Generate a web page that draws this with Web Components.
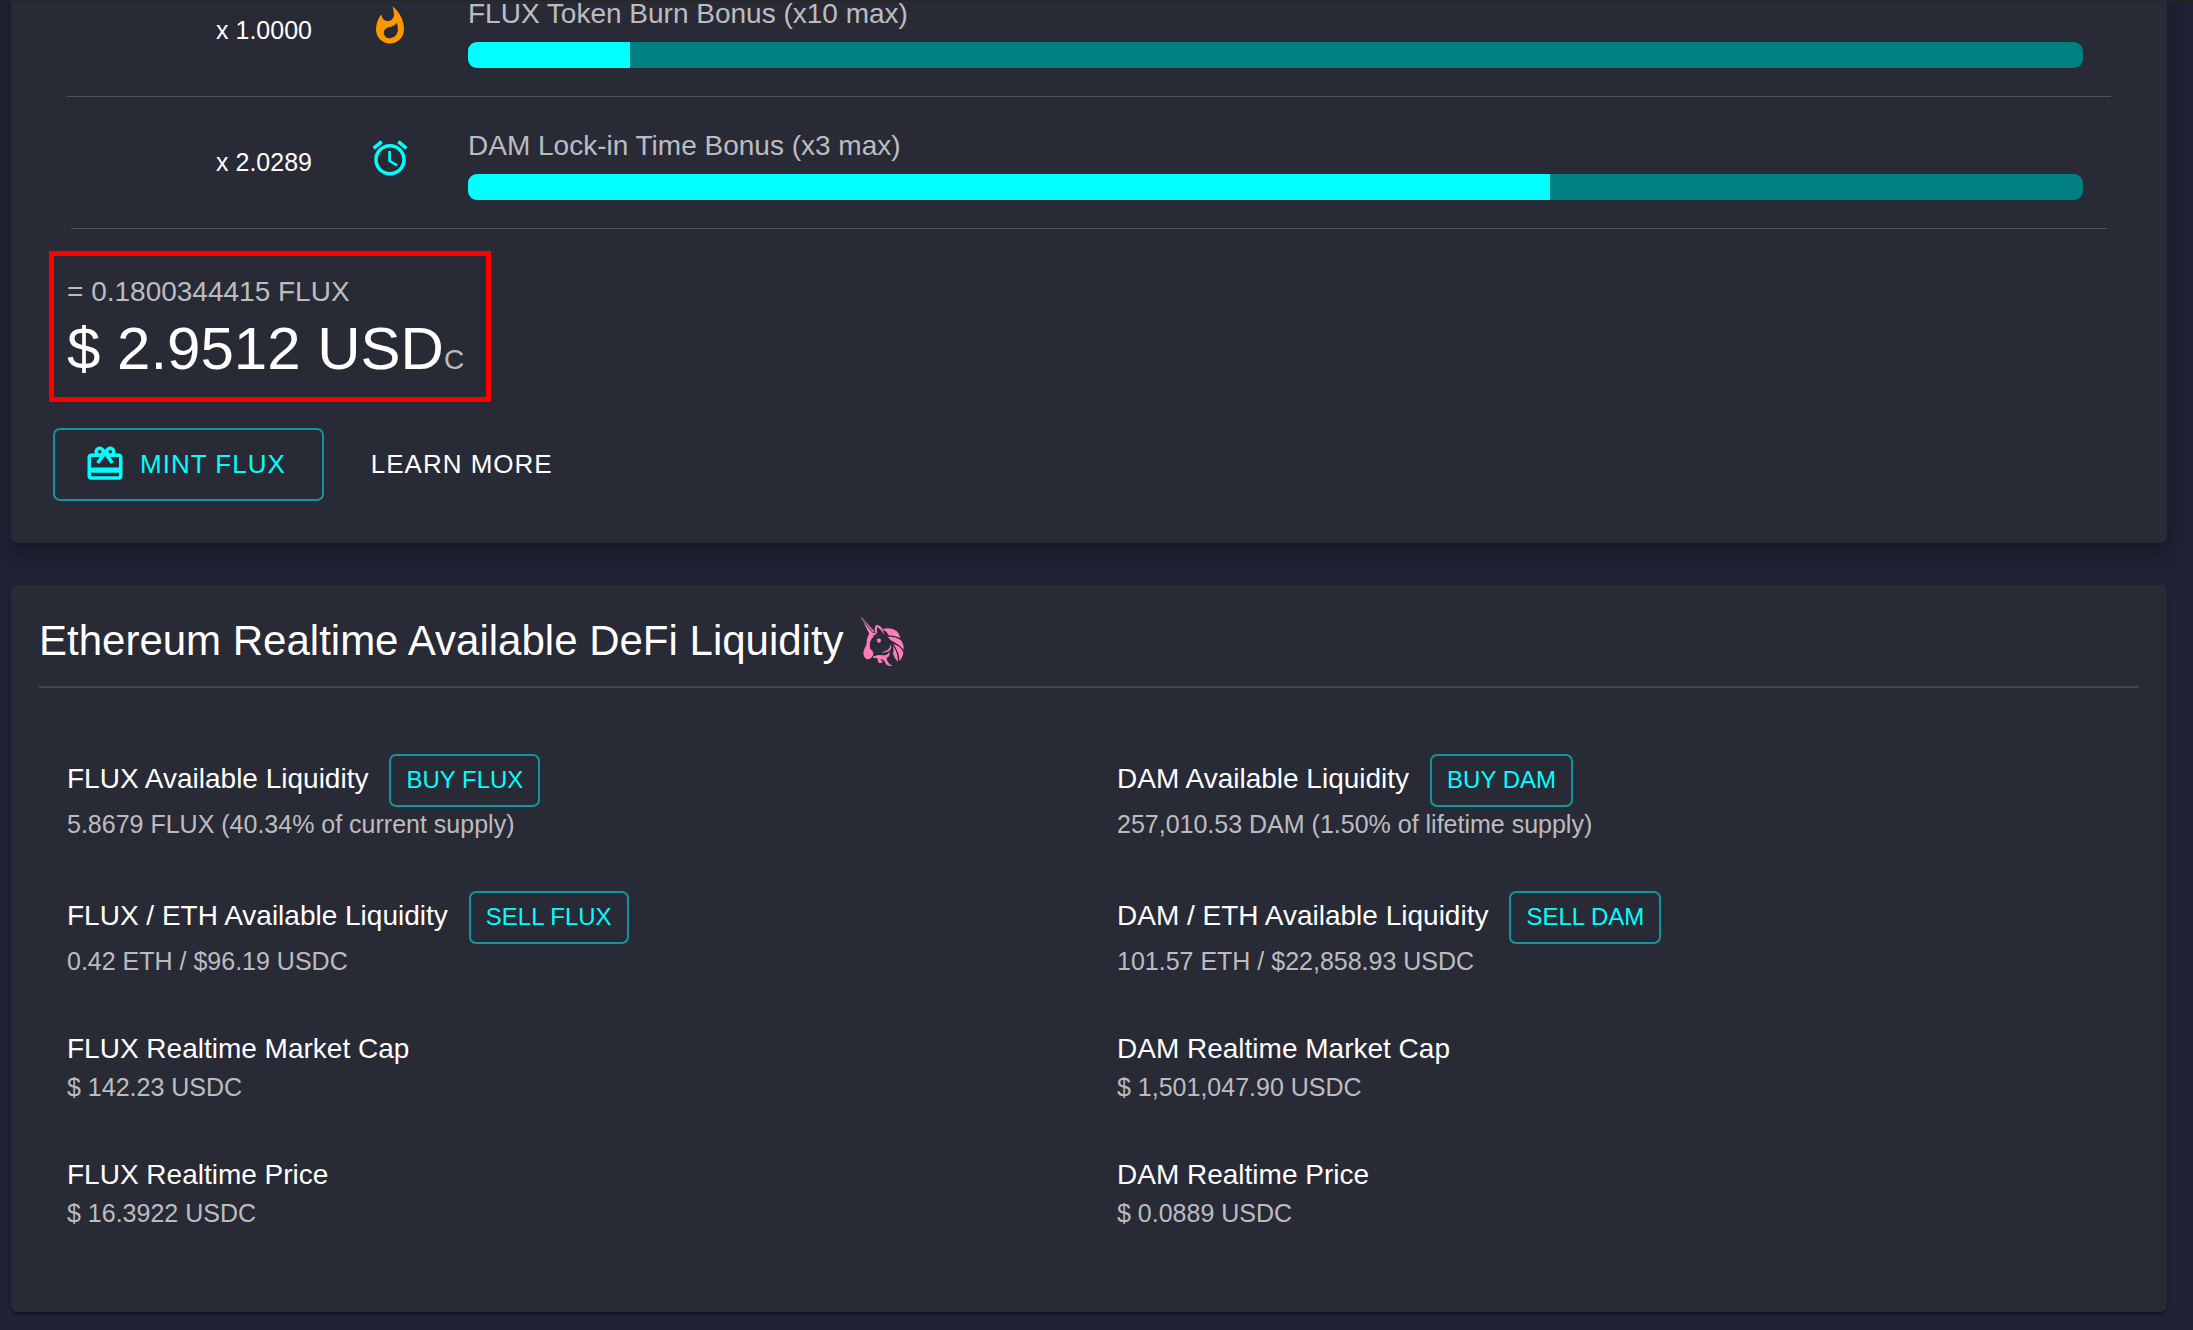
<!DOCTYPE html>
<html lang="en">
<head>
<meta charset="utf-8">
<title>Datamine Network</title>
<style>
	body {
		margin: 0;
		background: #202235;
		color: #fff;
		font-family: "Liberation Sans", Arial, sans-serif;
		font-size: 28px;
		line-height: 42px;
	}
</style>
</head>
<body>
<dam-page>
	<dam-card elevation="8">
		<dam-multiplier value="x 1.0000" percent="10">
			<dam-icon slot="icon" name="flame"></dam-icon>
			FLUX Token Burn Bonus (x10 max)
		</dam-multiplier>
		<dam-multiplier value="x 2.0289" percent="67" last>
			<dam-icon slot="icon" name="alarm"></dam-icon>
			DAM Lock-in Time Bonus (x3 max)
		</dam-multiplier>
		<dam-balance amount="= 0.1800344415 FLUX" price="$ 2.9512 USD" suffix="C"></dam-balance>
		<dam-actions>
			<dam-button size="large"><dam-icon slot="icon" name="redeem"></dam-icon>MINT FLUX</dam-button>
			<dam-button size="large" plain>LEARN MORE</dam-button>
		</dam-actions>
	</dam-card>

	<dam-card elevation="1">
		<dam-title>Ethereum Realtime Available DeFi Liquidity<dam-icon slot="icon" name="unicorn"></dam-icon></dam-title>
		<dam-stats>
			<dam-stat value="5.8679 FLUX (40.34% of current supply)">FLUX Available Liquidity<dam-button slot="action">BUY FLUX</dam-button></dam-stat>
			<dam-stat value="257,010.53 DAM (1.50% of lifetime supply)">DAM Available Liquidity<dam-button slot="action">BUY DAM</dam-button></dam-stat>
			<dam-stat value="0.42 ETH / $96.19 USDC">FLUX / ETH Available Liquidity<dam-button slot="action">SELL FLUX</dam-button></dam-stat>
			<dam-stat value="101.57 ETH / $22,858.93 USDC">DAM / ETH Available Liquidity<dam-button slot="action">SELL DAM</dam-button></dam-stat>
			<dam-stat value="$ 142.23 USDC">FLUX Realtime Market Cap</dam-stat>
			<dam-stat value="$ 1,501,047.90 USDC">DAM Realtime Market Cap</dam-stat>
			<dam-stat value="$ 16.3922 USDC">FLUX Realtime Price</dam-stat>
			<dam-stat value="$ 0.0889 USDC">DAM Realtime Price</dam-stat>
		</dam-stats>
	</dam-card>
</dam-page>

<script>
	// Base class: renders the string from template() into the shadow root
	class DamElement extends HTMLElement {
		connectedCallback() {
			if (this.shadowRoot) return
			this.attachShadow({ mode: 'open' })
			this.shadowRoot.innerHTML = this.template()
		}
	}

	const icons = {
		flame: {
			box: '0 0 24 24', width: 42, height: 42, color: '#ff9800',
			body: '<path d="M13.5.67s.74 2.65.74 4.8c0 2.06-1.35 3.73-3.41 3.73-2.07 0-3.63-1.67-3.63-3.73l.03-.36C5.21 7.51 4 10.62 4 14c0 4.42 3.58 8 8 8s8-3.58 8-8C20 8.61 17.41 3.8 13.5.67zM11.71 19c-1.78 0-3.22-1.4-3.22-3.14 0-1.62 1.05-2.76 2.81-3.12 1.77-.36 3.6-1.21 4.62-2.58.39 1.29.59 2.65.59 4.04 0 2.65-2.15 4.8-4.8 4.8z"/>',
		},
		alarm: {
			box: '0 0 24 24', width: 42, height: 42, color: '#0ff',
			body: '<path d="M22 5.72l-4.6-3.86-1.29 1.53 4.6 3.86L22 5.72zM7.88 3.39L6.6 1.86 2 5.71l1.29 1.53 4.59-3.85zM12.5 8H11v6l4.75 2.85.75-1.23-4-2.37V8zM12 4c-4.97 0-9 4.03-9 9s4.02 9 9 9c4.97 0 9-4.03 9-9s-4.03-9-9-9zm0 16c-3.87 0-7-3.13-7-7s3.13-7 7-7 7 3.13 7 7-3.13 7-7 7z"/>',
		},
		redeem: {
			box: '0 0 24 24', width: 42, height: 42, color: '#0ff',
			body: '<path d="M20 6h-2.18c.11-.31.18-.65.18-1 0-1.66-1.34-3-3-3-1.05 0-1.96.54-2.5 1.35l-.5.67-.5-.68C10.96 2.54 10.05 2 9 2 7.34 2 6 3.34 6 5c0 .35.07.69.18 1H4c-1.11 0-1.99.89-1.99 2L2 19c0 1.11.89 2 2 2h16c1.11 0 2-.89 2-2V8c0-1.11-.89-2-2-2zm-5-2c.55 0 1 .45 1 1s-.45 1-1 1-1-.45-1-1 .45-1 1-1zM9 4c.55 0 1 .45 1 1s-.45 1-1 1-1-.45-1-1 .45-1 1-1zm11 15H4v-2h16v2zm0-5H4V8h5.08L7 10.83 8.62 12 11 8.76l1-1.36 1 1.36L15.38 12 17 10.83 14.92 8H20v6z"/>',
		},
		unicorn: {
			box: '58 46 135 156', width: 45, height: 52, color: '#ff7bb9',
			body: `
				<path d="M60 50L101 95L98 101L102 99L108 104L94 109Q88 106 85 101Z"/>
				<path d="M66 61L98 100" fill="none" stroke="#282a36" stroke-width="3"/>
				<path d="M104 99Q99 82 107 76Q120 76 126 90L131 105Q121 90 110 81Q107 88 110 101Z"/>
				<path d="M86 100L100 110Q91 117 88 128Q86 141 89 149Q96 152 98 159Q99 165 94 172Q85 181 78 178Q68 174 68 158Q71 145 77 136Q77 116 86 100Z"/>
				<path d="M108 119Q115 114 121 120Q122 128 115 130Q108 128 108 119Z"/>
				<path d="M124 88Q151 81 168 94Q177 103 179 115Q160 108 144 107Q137 94 124 88Z"/>
				<path d="M141 111Q165 110 180 121Q190 132 189 150Q176 134 160 127Q148 123 141 111Z"/>
				<path d="M158 132Q180 139 188 158Q187 174 176 184Q177 160 158 132Z"/>
				<path d="M157 138Q172 157 172 187Q161 177 157 162Q160 150 157 138Z"/>
				<path d="M151 133Q155 149 144 155Q132 160 121 158Q135 155 141 151Q148 145 151 133Z"/>
				<path d="M97 171Q110 163 127 167Q140 168 146 156Q149 170 138 174Q138 190 155 198Q137 202 131 184Q127 176 119 180Q119 185 126 182Q126 191 117 191Q110 187 111 178Q104 172 97 176Z"/>`,
		},
	}

	class DamIcon extends DamElement {
		template() {
			const icon = icons[this.getAttribute('name')]
			return `
				<style>
					:host { display: block; flex: none; }
					svg { display: block; fill: ${icon.color}; }
				</style>
				<svg viewBox="${icon.box}" width="${icon.width}" height="${icon.height}" aria-hidden="true">${icon.body}</svg>
			`
		}
	}

	class DamPage extends DamElement {
		template() {
			return `
				<style>
					:host {
						display: block;
						overflow: clip;
						border-top: 1px solid #252525;
					}
					/* the list is scrolled a little past its first row */
					main {
						display: flex;
						flex-direction: column;
						gap: 42px;
						margin-top: -36px;
						padding: 0 26px 18px 11px;
					}
				</style>
				<main><slot></slot></main>
			`
		}
	}

	class DamCard extends DamElement {
		template() {
			return `
				<style>
					:host {
						display: block;
						background: #282a36;
						border-radius: 7px;
					}
					:host([elevation="8"]) {
						box-shadow: 0 9px 9px -5px rgba(0, 0, 0, .2), 0 14px 18px 2px rgba(0, 0, 0, .08), 0 5px 24px 4px rgba(0, 0, 0, .1);
					}
					:host([elevation="1"]) {
						box-shadow: 0 4px 2px -2px rgba(0, 0, 0, .2), 0 2px 2px rgba(0, 0, 0, .14), 0 2px 5px rgba(0, 0, 0, .12);
					}
				</style>
				<slot></slot>
			`
		}
	}

	class DamMultiplier extends DamElement {
		template() {
			return `
				<style>
					:host {
						display: grid;
						grid-template-columns: 245px 156px 1fr;
						margin: 0 56px;
						padding-right: 28px;
						border-bottom: 1px solid #515151;
					}
					:host([last]) {
						grid-template-columns: 241px 156px 1fr;
						margin: 0 60px;
						padding-right: 24px;
					}
					.value {
						padding-top: 46px;
						font-size: 25px;
						line-height: 38px;
						text-align: right;
					}
					.icon {
						padding-top: 40px;
						justify-self: center;
					}
					.bonus { padding: 33px 0 28px; }
					.label {
						color: rgba(255, 255, 255, .7);
						line-height: 32px;
						margin-bottom: 12px;
					}
					.track {
						height: 26px;
						border-radius: 9px;
						background: #008080;
						overflow: hidden;
					}
					.fill {
						height: 100%;
						width: ${this.getAttribute('percent')}%;
						background: #0ff;
					}
				</style>
				<div class="value">${this.getAttribute('value')}</div>
				<div class="icon"><slot name="icon"></slot></div>
				<div class="bonus">
					<div class="label"><slot></slot></div>
					<div class="track"><div class="fill"></div></div>
				</div>
			`
		}
	}

	class DamBalance extends DamElement {
		template() {
			return `
				<style>
					:host {
						display: block;
						width: fit-content;
						margin: 22px 38px 26px;
						padding: 15px 22px 12px 13px;
						border: 5px solid #f00;
					}
					.amount, small { color: rgba(255, 255, 255, .7); }
					.price { font-size: 60px; line-height: 72px; }
					small { font-size: 28px; line-height: 42px; }
				</style>
				<div class="amount">${this.getAttribute('amount')}</div>
				<div class="price">${this.getAttribute('price')}<small>${this.getAttribute('suffix')}</small></div>
			`
		}
	}

	class DamActions extends DamElement {
		template() {
			return `
				<style>
					:host {
						display: flex;
						gap: 14px;
						padding: 0 42px 42px;
					}
				</style>
				<slot></slot>
			`
		}
	}

	class DamButton extends DamElement {
		template() {
			return `
				<style>
					:host { display: block; flex: none; }
					button {
						display: flex;
						align-items: center;
						justify-content: center;
						gap: 14px;
						height: 53px;
						padding: 0 15px 2px;
						border: 2px solid rgba(0, 255, 255, .5);
						border-radius: 7px;
						background: none;
						color: #0ff;
						font: 24px/42px "Liberation Sans", Arial, sans-serif;
						cursor: pointer;
					}
					:host([size="large"]) button {
						height: 73px;
						padding: 0 36px 2px 29px;
						font-size: 26px;
						letter-spacing: 1px;
					}
					:host([plain]) button {
						padding: 0 31px 2px;
						border-color: transparent;
						color: #fff;
					}
				</style>
				<button type="button"><slot name="icon"></slot><span><slot></slot></span></button>
			`
		}
	}

	class DamTitle extends DamElement {
		template() {
			return `
				<style>
					:host {
						display: block;
						margin: 0 28px;
						padding: 28px 0 17px;
						border-bottom: 2px solid #42444e;
					}
					h2 {
						display: flex;
						align-items: center;
						gap: 16px;
						margin: 0;
						font-size: 42px;
						font-weight: 400;
						line-height: 56px;
					}
				</style>
				<h2><span><slot></slot></span><slot name="icon"></slot></h2>
			`
		}
	}

	class DamStats extends DamElement {
		template() {
			return `
				<style>
					:host {
						display: grid;
						grid-template-columns: 1fr 1fr;
						row-gap: 49px;
						padding: 66px 28px 81px;
					}
				</style>
				<slot></slot>
			`
		}
	}

	class DamStat extends DamElement {
		template() {
			return `
				<style>
					:host { display: block; padding: 0 28px; }
					.name {
						display: flex;
						align-items: baseline;
						gap: 21px;
					}
					.value {
						color: rgba(255, 255, 255, .7);
						font-size: 25px;
						line-height: 35px;
					}
				</style>
				<div class="name"><span><slot></slot></span><slot name="action"></slot></div>
				<div class="value">${this.getAttribute('value')}</div>
			`
		}
	}

	customElements.define('dam-icon', DamIcon)
	customElements.define('dam-page', DamPage)
	customElements.define('dam-card', DamCard)
	customElements.define('dam-multiplier', DamMultiplier)
	customElements.define('dam-balance', DamBalance)
	customElements.define('dam-actions', DamActions)
	customElements.define('dam-button', DamButton)
	customElements.define('dam-title', DamTitle)
	customElements.define('dam-stats', DamStats)
	customElements.define('dam-stat', DamStat)
</script>
</body>
</html>
